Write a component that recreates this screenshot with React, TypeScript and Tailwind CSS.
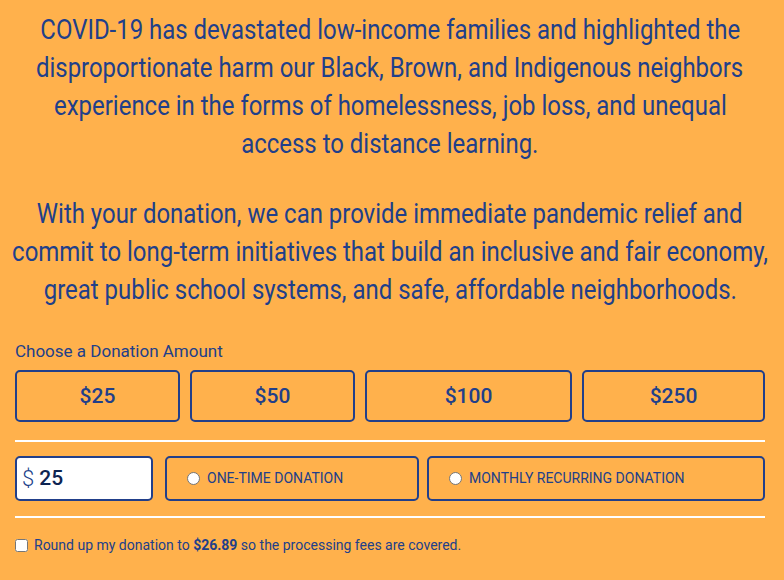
import { useState } from 'react';

const amounts = [
  { value: 25, label: '$25' },
  { value: 50, label: '$50' },
  { value: 100, label: '$100' },
  { value: 250, label: '$250' },
];

const introLines = [
  'COVID-19 has devastated low-income families and highlighted the',
  'disproportionate harm our Black, Brown, and Indigenous neighbors',
  'experience in the forms of homelessness, job loss, and unequal',
  'access to distance learning.',
];

const pitchLines = [
  'With your donation, we can provide immediate pandemic relief and',
  'commit to long-term initiatives that build an inclusive and fair economy,',
  'great public school systems, and safe, affordable neighborhoods.',
];

// condensed headline look: Roboto squeezed horizontally, one line per row
function Line({ text }: { text: string }) {
  return (
    <div className="flex justify-center">
      <span className="shrink-0 whitespace-nowrap scale-x-[0.855]">{text}</span>
    </div>
  );
}

export default function App() {
  const [amount, setAmount] = useState('25');
  const [frequency, setFrequency] = useState<'once' | 'monthly' | ''>('');
  const [roundUp, setRoundUp] = useState(false);

  return (
    <div className="min-h-screen w-full bg-[#ffb14c] text-[#213f8a] font-['Roboto',sans-serif]">
      <div className="pl-[15px] pr-[19px] pt-[11px]">
        {/* Intro copy */}
        <div className="text-[28px] leading-[38px]">
          <div>
            {introLines.map((l) => (
              <Line key={l} text={l} />
            ))}
          </div>
          <div className="mt-[32px]">
            {pitchLines.map((l) => (
              <Line key={l} text={l} />
            ))}
          </div>
        </div>

        {/* Amount picker */}
        <div className="mt-[32px] text-[17px] leading-[20px]">Choose a Donation Amount</div>
        <div className="mt-[9px] grid grid-cols-[165px_165px_207px_183px] gap-[10px]">
          {amounts.map((a) => (
            <button
              key={a.value}
              onClick={() => setAmount(String(a.value))}
              className="h-[52px] rounded-[5px] border-2 border-[#213f8a] pt-[2px] text-[21px] font-medium text-[#213f8a]"
            >
              {a.label}
            </button>
          ))}
        </div>

        <div className="mt-[18px] h-[2px] bg-white" />

        {/* Custom amount + frequency */}
        <div className="mt-[14px] flex h-[45px]">
          <label className="flex w-[138px] shrink-0 items-center rounded-[5px] border-2 border-[#213f8a] bg-white px-[5px]">
            <span className="text-[22px] font-light text-[#213f8a]">$</span>
            <input
              value={amount}
              onChange={(e) => setAmount(e.target.value)}
              className="ml-[5px] w-0 min-w-0 flex-1 bg-transparent text-[21px] font-medium text-[#0d2452] outline-none"
            />
          </label>
          <button
            onClick={() => setFrequency('once')}
            className="ml-[12px] flex w-[254px] shrink-0 items-center rounded-[5px] border-2 border-[#213f8a] pl-[20px] text-[14px] uppercase"
          >
            <span
              className={`h-[13px] w-[13px] rounded-full border border-[#767676] ${
                frequency === 'once' ? 'bg-[#213f8a]' : 'bg-white'
              }`}
            />
            <span className="ml-[7px]">One-time donation</span>
          </button>
          <button
            onClick={() => setFrequency('monthly')}
            className="ml-[8px] flex min-w-0 flex-1 items-center rounded-[5px] border-2 border-[#213f8a] pl-[20px] text-[14px] uppercase"
          >
            <span
              className={`h-[13px] w-[13px] rounded-full border border-[#767676] ${
                frequency === 'monthly' ? 'bg-[#213f8a]' : 'bg-white'
              }`}
            />
            <span className="ml-[7px]">Monthly recurring donation</span>
          </button>
        </div>

        <div className="mt-[15px] h-[2px] bg-white" />

        {/* Fee cover */}
        <label className="mt-[18px] flex items-center text-[14px] leading-[18px]">
          <input
            type="checkbox"
            checked={roundUp}
            onChange={(e) => setRoundUp(e.target.checked)}
            className="m-0 h-[13px] w-[13px]"
          />
          <span className="ml-[6px]">
            Round up my donation to <b className="font-bold">$26.89</b> so the processing fees are covered.
          </span>
        </label>
      </div>
    </div>
  );
}
